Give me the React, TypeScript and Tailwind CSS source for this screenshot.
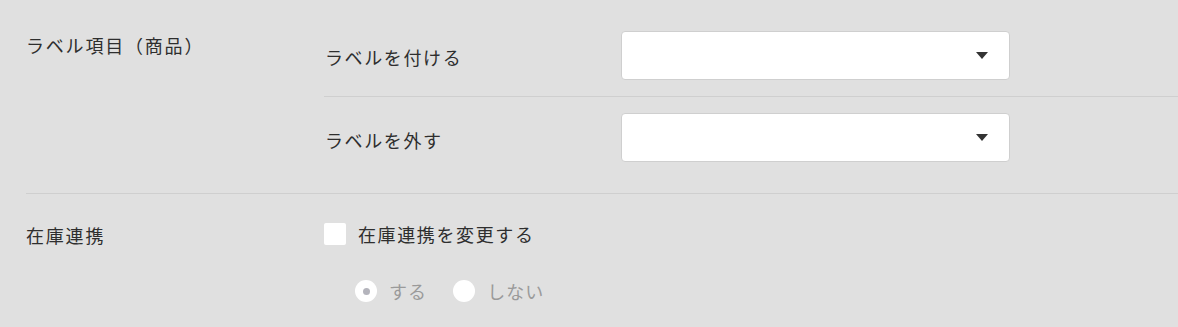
import React from "react";

const font = { fontFamily: '"Noto Sans CJK JP", "Noto Sans", sans-serif' };

function Select() {
  return (
    <div className="relative w-[389px] h-[49px] bg-white border border-[#cfcfcf] rounded-[4px]">
      <svg className="absolute left-[354px] top-[20px]" width="12" height="7" viewBox="0 0 12 7">
        <path d="M0 0 L12 0 L6 7 Z" fill="#333333" />
      </svg>
    </div>
  );
}

export default function App() {
  return (
    <div className="w-[1178px] h-[327px] bg-[#e0e0e0] text-[#2e2e2e] overflow-hidden" style={font}>
      <div className="pl-[26px]">
        <div className="flex border-b border-[#cfcfcf] pt-[15px] pb-[15px]">
          <div className="w-[298px] pt-[17px] text-[18px] leading-[26px] tracking-[0.1em]">ラベル項目（商品）</div>
          <div className="flex-1">
            <div className="flex items-center py-[16px] border-b border-[#cfcfcf]">
              <div className="w-[297px] pl-[1px] text-[18px] leading-[26px] tracking-[0.09em] pt-[3px]">ラベルを付ける</div>
              <Select />
            </div>
            <div className="flex items-center py-[16px]">
              <div className="w-[297px] pl-[1px] text-[18px] leading-[26px] tracking-[0.09em] pt-[5px]">ラベルを外す</div>
              <Select />
            </div>
          </div>
        </div>
        <div className="flex pt-[27px]">
          <div className="w-[298px] pt-[1px] text-[18px] leading-[26px] tracking-[0.1em]">在庫連携</div>
          <div className="flex-1">
            <div className="flex items-center">
              <div className="w-[22px] h-[22px] bg-white rounded-[2px]" />
              <div className="ml-[12px] text-[18px] leading-[26px] tracking-[0.09em]">在庫連携を変更する</div>
            </div>
            <div className="flex items-center mt-[31px] pl-[31px] text-[#9a9a9a]">
              <div className="w-[22px] h-[22px] bg-white rounded-full flex items-center justify-center">
                <div className="w-[7px] h-[7px] rounded-full bg-[#b4b4bc]" />
              </div>
              <div className="ml-[12px] text-[18px] leading-[26px] tracking-[0.06em]">する</div>
              <div className="ml-[26px] w-[22px] h-[22px] bg-white rounded-full" />
              <div className="ml-[12px] text-[18px] leading-[26px] tracking-[0.06em]">しない</div>
            </div>
          </div>
        </div>
      </div>
    </div>
  );
}
